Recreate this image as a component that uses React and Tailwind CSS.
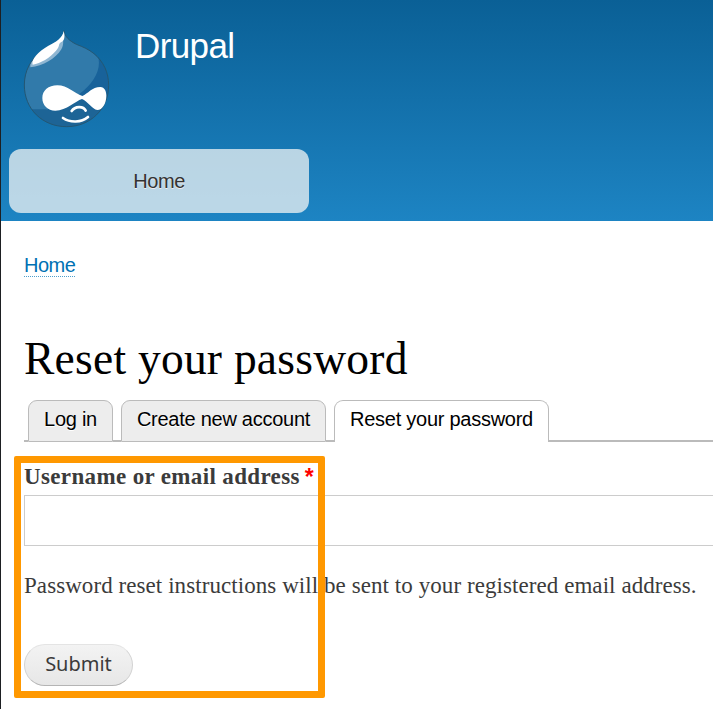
function DrupalLogo() {
  return (
    <svg className="block h-[110px] w-[100px] shrink-0" viewBox="0 0 300 330" aria-label="Drupal logo">
      <defs>
        <clipPath id="drop">
          <path d="M147 17C149 35 164 48 184 58C205 66 221 73 237 86C265 109 281 142 281 181C281 252 226 305 155 305C82 305 28 252 28 180C28 138 47 103 78 80C95 67 113 63 130 52C143 43 147 31 147 17Z" />
        </clipPath>
      </defs>
      <g clipPath="url(#drop)">
        <rect width="300" height="330" fill="#18629a" />
        <path d="M0 0H240L249 92C260 133 238 173 193 207L95 255H0Z" fill="#317aaa" />
        <path d="M42 253H93C111 262 133 258 158 244L202 222L235 253L279 248L250 320H42Z" fill="#1d6496" />
        <path d="M46 122C44 101 65 74 99 58C126 45 142 34 145 17L147 40C141 48 149 54 139 73C122 101 84 124 46 127Z" fill="#8fb6d2" />
      </g>
      <path d="M147 17C149 35 164 48 184 58C205 66 221 73 237 86C265 109 281 142 281 181C281 252 226 305 155 305C82 305 28 252 28 180C28 138 47 103 78 80C95 67 113 63 130 52C143 43 147 31 147 17Z" fill="none" stroke="#245773" strokeWidth="3" />
      <path d="M53 119C48 104 70 79 99 63C122 52 143 39 146 18C151 36 148 47 139 51C128 57 137 62 123 77C105 98 77 115 53 119Z" fill="#fff" />
      <path d="M82 219C82 197 100 181 127 181C158 181 179 206 202 213C219 206 231 186 256 186C269 187 274 198 274 212C274 235 262 255 247 255C232 253 217 229 201 222C181 228 155 257 121 257C98 257 82 241 82 219Z" fill="#fff" />
      <path d="M170 258C180 243 205 242 212 257M144 279C166 294 199 293 219 276" fill="none" stroke="#fff" strokeWidth="8" strokeLinecap="round" />
    </svg>
  );
}

export default function App() {
  return (
    <div className="relative h-[709px] w-[713px] overflow-hidden border-l border-[#1d1f22] bg-white font-['Liberation_Sans',Arial,sans-serif]">
      <header className="h-[221px] bg-linear-to-b from-[#0a6096] to-[#1d84c3] pt-[25px]">
        <div className="flex h-[124px] pl-[14px]">
          <DrupalLogo />
          <div className="ml-[20px] text-[35px] leading-[42px] tracking-[-0.6px] text-white">Drupal</div>
        </div>
        <nav className="ml-2 flex h-16 w-[300px] items-center justify-center rounded-xl bg-[#fffcf8]/70 text-xl tracking-[-0.4px] text-[#333] [text-shadow:0_1px_#eee]">
          Home
        </nav>
      </header>
      <main className="pl-[23px]">
        <div className="flex h-[106px] pt-[32px]">
          <a className="h-6 border-b border-dotted border-[#4f9fcd] text-xl leading-6 tracking-[-0.5px] text-[#0071b3]">Home</a>
        </div>
        <h1 className="h-[73px] whitespace-nowrap pt-[7px] font-['Liberation_Serif',serif] text-[45.5px] leading-[50px] tracking-[0.24px] text-black">
          Reset your password
        </h1>
        <div className="flex h-[42px] text-xl leading-9 tracking-[-0.26px] whitespace-nowrap text-black">
          <div className="w-1 border-b-2 border-[#bbb]" />
          <div className="w-[85px] rounded-t-[9px] border border-[#bbb] bg-[#ededed] text-center [text-shadow:0_1px_#fff]">Log in</div>
          <div className="w-2 border-b-2 border-[#bbb]" />
          <div className="w-[205px] rounded-t-[9px] border border-[#bbb] bg-[#ededed] text-center [text-shadow:0_1px_#fff]">Create new account</div>
          <div className="w-2 border-b-2 border-[#bbb]" />
          <div className="w-[215px] rounded-t-[9px] border border-b-0 border-[#bbb] text-center">Reset your password</div>
          <div className="flex-1 border-b-2 border-[#bbb]" />
        </div>
        <form className="pt-[21px] font-['Liberation_Serif',serif] text-[#3b3b3b]">
          <label className="flex h-8 text-[23px] leading-7 font-bold tracking-[0.36px] whitespace-nowrap">
            <span>Username or email address</span>
            <span className="ml-[5px] font-['Liberation_Sans',sans-serif] text-[#f00]">*</span>
          </label>
          <input className="block h-[51px] w-[760px] border border-[#ccc] bg-white" aria-label="Username or email address" />
          <p className="mt-[26px] text-[23px] leading-7 tracking-[0.07px] whitespace-nowrap">
            Password reset instructions will be sent to your registered email address.
          </p>
          <button type="button" className="mt-[44px] block h-[42px] w-[109px] rounded-[21px] border border-[#e4e4e4] border-x-[#d2d2d2] border-b-[#b4b4b4] bg-linear-to-b from-[#f3f3f3] to-[#e7e7e7] pb-[3px] font-['Noto_Sans',sans-serif] text-xl text-[#3a3a3a]">
            Submit
          </button>
        </form>
      </main>
      <div className="absolute top-[456px] left-[13px] h-[242px] w-[311px] rounded-[2px] border-[7px] border-[#ff9800]" />
    </div>
  );
}
